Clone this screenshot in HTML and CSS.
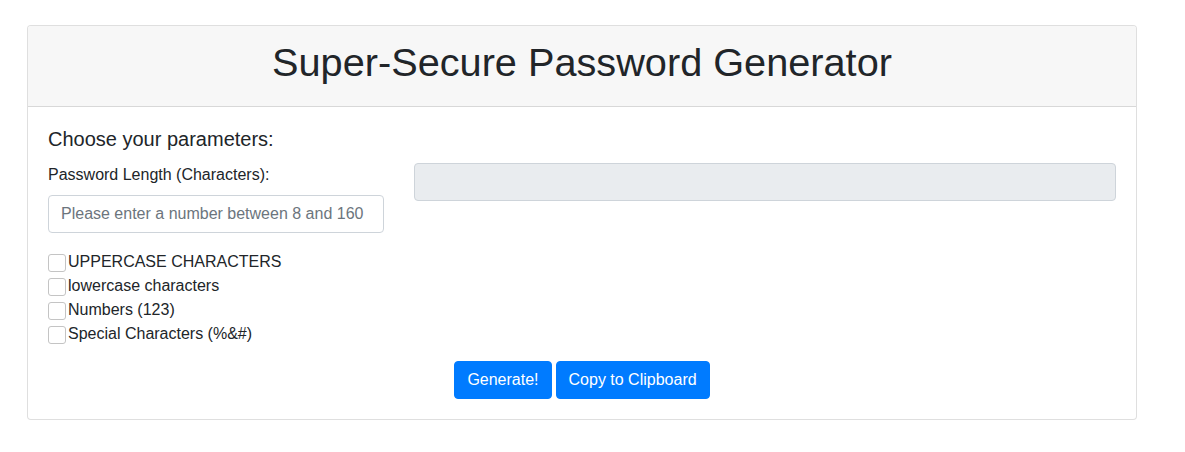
FILE: index.html
```html
<!DOCTYPE html>
<html lang="en">
<head>
<meta charset="utf-8">
<title>Super-Secure Password Generator</title>
<link rel="stylesheet" href="styles.css">
</head>
<body>
<div class="card">
  <div class="card-header">
    <h1 class="title">Super-Secure Password Generator</h1>
  </div>
  <div class="card-body">
    <h5 class="subtitle">Choose your parameters:</h5>
    <div class="row">
      <div class="col-left">
        <div class="form-group">
          <label class="label" for="len">Password Length (Characters):</label>
          <input class="form-control" id="len" type="text" placeholder="Please enter a number between 8 and 160">
        </div>
        <div class="checks">
          <label class="check"><input type="checkbox" class="box">UPPERCASE CHARACTERS</label>
          <label class="check"><input type="checkbox" class="box">lowercase characters</label>
          <label class="check"><input type="checkbox" class="box">Numbers (123)</label>
          <label class="check"><input type="checkbox" class="box">Special Characters (%&amp;#)</label>
        </div>
      </div>
      <div class="col-right">
        <input class="form-control readonly" type="text" readonly>
      </div>
    </div>
    <div class="actions">
      <button class="btn" type="button">Generate!</button>
      <button class="btn" type="button">Copy to Clipboard</button>
    </div>
  </div>
</div>
</body>
</html>
```
FILE: styles.css
```css
* { box-sizing: border-box; }
html, body {
  margin: 0;
  padding: 0;
  background: #fff;
  color: #212529;
  font-family: "Liberation Sans", Arial, sans-serif;
  font-size: 16px;
  line-height: 1.5;
}
.card {
  width: 1110px;
  margin: 25px 0 0 27px;
  border: 1px solid rgba(0,0,0,.125);
  border-radius: 4px;
  background: #fff;
}
.card-header {
  background: #f7f7f7;
  border-bottom: 1px solid rgba(0,0,0,.125);
  padding: 12px 20px;
  border-radius: 3px 3px 0 0;
}
.title {
  margin: 0 0 8px;
  font-size: 39.7px;
  font-weight: 400;
  line-height: 48px;
  text-align: center;
}
.card-body {
  padding: 20px;
}
.subtitle {
  margin: 0 0 12px;
  font-size: 20px;
  font-weight: 400;
  line-height: 24px;
}
.row {
  display: flex;
  gap: 30px;
}
.col-left { width: 336px; flex: none; }
.col-right { flex: 1; }
.form-group { margin-bottom: 16px; }
.label {
  display: block;
  margin-bottom: 8px;
  font-size: 16px;
  line-height: 24px;
}
.form-control {
  display: block;
  width: 100%;
  height: 38px;
  padding: 6px 12px;
  font-family: inherit;
  font-size: 16px;
  line-height: 24px;
  color: #495057;
  background: #fff;
  border: 1px solid #ced4da;
  border-radius: 4px;
  outline: none;
}
.form-control::placeholder { color: #6c757d; }
.readonly { background: #e9ecef; }
.checks {
  display: flex;
  flex-direction: column;
  padding-top: 1px;
}
.check {
  display: flex;
  align-items: center;
  height: 24px;
  font-size: 16px;
}
.box {
  appearance: none;
  -webkit-appearance: none;
  width: 18px;
  height: 18px;
  margin: 1px 2px 0 0;
  border: 1px solid #c4c4c4;
  border-radius: 3px;
  background: #fff;
  flex: none;
}
.actions {
  display: flex;
  justify-content: center;
  gap: 4px;
  margin-top: 15px;
}
.btn {
  height: 38px;
  padding: 6px 12px;
  font-family: inherit;
  font-size: 16px;
  line-height: 24px;
  color: #fff;
  background: #007bff;
  border: 1px solid #007bff;
  border-radius: 4px;
}
```
